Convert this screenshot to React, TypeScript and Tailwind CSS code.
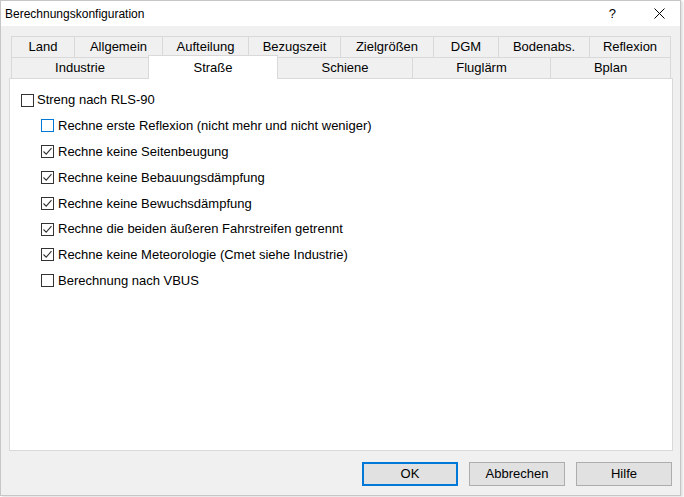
import React from 'react'

type Tab = { label: string; w: number }

const topTabs: Tab[] = [
  { label: 'Land', w: 63 },
  { label: 'Allgemein', w: 88 },
  { label: 'Aufteilung', w: 86 },
  { label: 'Bezugszeit', w: 92 },
  { label: 'Zielgrößen', w: 93 },
  { label: 'DGM', w: 65 },
  { label: 'Bodenabs.', w: 91 },
  { label: 'Reflexion', w: 82 },
]

const options = [
  { label: 'Rechne erste Reflexion (nicht mehr und nicht weniger)', checked: false, focus: true },
  { label: 'Rechne keine Seitenbeugung', checked: true },
  { label: 'Rechne keine Bebauungsdämpfung', checked: true },
  { label: 'Rechne keine Bewuchsdämpfung', checked: true },
  { label: 'Rechne die beiden äußeren Fahrstreifen getrennt', checked: true },
  { label: 'Rechne keine Meteorologie (Cmet siehe Industrie)', checked: true },
  { label: 'Berechnung nach VBUS', checked: false },
]

function CheckBox({ checked, focus }: { checked: boolean; focus?: boolean }) {
  return (
    <span
      className={
        'flex h-[13px] w-[13px] shrink-0 items-center justify-center border bg-white ' +
        (focus ? 'border-[#0078d7]' : 'border-[#333333]')
      }
    >
      {checked && (
        <svg width="11" height="11" viewBox="0 0 11 11">
          <path d="M1.5 5.5 L4.2 8.2 L9.5 2.2" fill="none" stroke="#333333" strokeWidth="1.1" />
        </svg>
      )}
    </span>
  )
}

function Button({ label, def }: { label: string; def?: boolean }) {
  return (
    <div
      className={
        'flex h-[24px] w-[96px] items-center justify-center bg-[#e1e1e1] text-[13px] text-black ' +
        (def ? 'border-2 border-[#0078d7]' : 'border border-[#adadad]')
      }
    >
      {label}
    </div>
  )
}

export default function App() {
  return (
    <div className="h-[497px] w-[684px] bg-white" style={{ fontFamily: '"Liberation Sans", Arial, sans-serif' }}>
      <div className="flex h-[496px] w-[681px] flex-col border border-[#c6c6c6] bg-[#f0f0f0] shadow-[2px_1px_2px_rgba(0,0,0,0.12)]">
        {/* title bar */}
        <div className="flex h-[25px] shrink-0 items-center bg-white pl-[4px] text-[12px] text-black">
          <span className="flex-1">Berechnungskonfiguration</span>
          <span className="mr-[38px] text-[13px]">?</span>
          <svg width="11" height="11" viewBox="0 0 11 11" className="mr-[15px]">
            <path d="M0.5 0.5 L10.5 10.5 M10.5 0.5 L0.5 10.5" stroke="#000" strokeWidth="1" />
          </svg>
        </div>

        {/* tab strip */}
        <div className="ml-[10px] mt-[10px] flex flex-col text-[13px] text-black">
          <div className="flex h-[21px]">
            {topTabs.map((t, i) => (
              <div
                key={t.label}
                className={
                  'flex items-center justify-center border-l border-t border-[#d9d9d9] ' +
                  (i === topTabs.length - 1 ? 'border-r' : '')
                }
                style={{ width: t.w }}
              >
                {t.label}
              </div>
            ))}
          </div>
          <div className="flex h-[21px] items-end">
            <div className="flex h-[21px] w-[137px] items-center justify-center border-l border-t border-[#d9d9d9]">
              Industrie
            </div>
            <div className="relative z-10 -mb-px flex h-[24px] w-[130px] items-start justify-center border-l border-r border-t border-[#d9d9d9] bg-white pt-[2px]">
              Straße
            </div>
            <div className="flex h-[21px] w-[134px] items-center justify-center border-t border-[#d9d9d9]">
              Schiene
            </div>
            <div className="flex h-[21px] w-[138px] items-center justify-center border-l border-t border-[#d9d9d9]">
              Fluglärm
            </div>
            <div className="flex h-[21px] w-[121px] items-center justify-center border-l border-r border-t border-[#d9d9d9]">
              Bplan
            </div>
          </div>
        </div>

        {/* page content */}
        <div className="ml-[8px] h-[373px] w-[664px] border border-[#d9d9d9] bg-white pl-[11px] pt-[8px] text-[13px] text-black">
          <label className="flex h-[26px] items-center gap-[3px]">
            <CheckBox checked={false} />
            <span>Streng nach RLS-90</span>
          </label>
          <div className="pl-[20px]">
            {options.map(o => (
              <label key={o.label} className="flex h-[25.8px] items-center gap-[4px]">
                <CheckBox checked={o.checked} focus={o.focus} />
                <span>{o.label}</span>
              </label>
            ))}
          </div>
        </div>

        {/* dialog buttons */}
        <div className="mt-[11px] flex justify-end gap-[11px] pr-[8px]">
          <Button label="OK" def />
          <Button label="Abbrechen" />
          <Button label="Hilfe" />
        </div>
      </div>
    </div>
  )
}
